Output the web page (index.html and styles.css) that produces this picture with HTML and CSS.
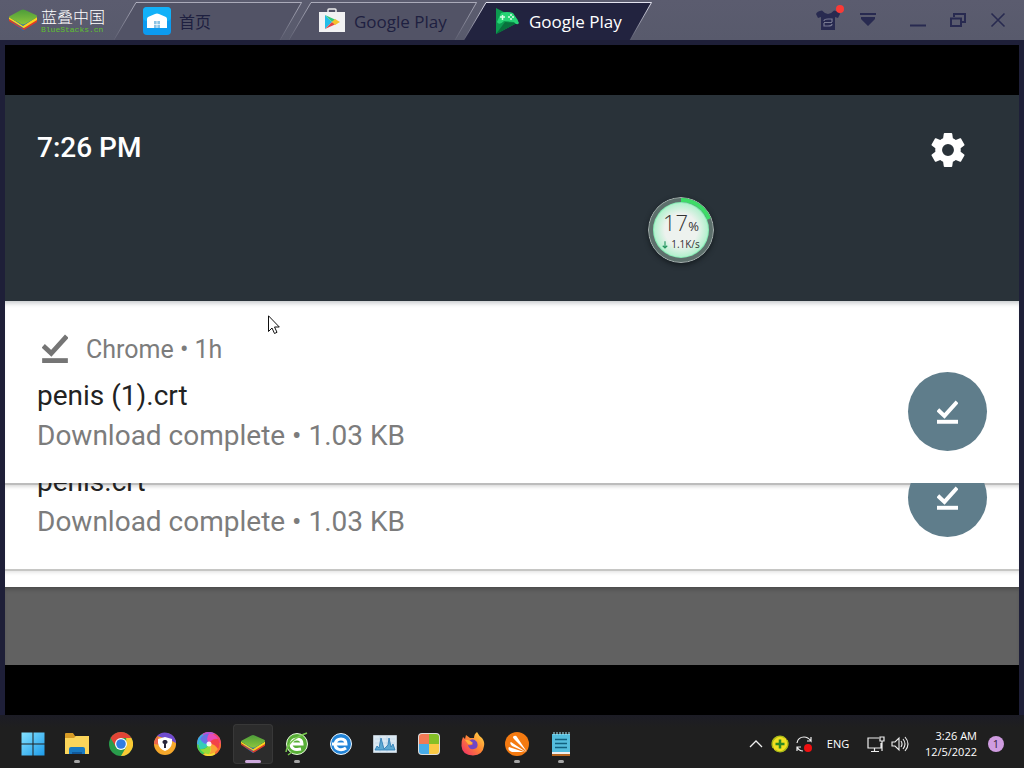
FILE: index.html
```html
<!DOCTYPE html>
<html lang="en">
<head>
<meta charset="utf-8">
<meta name="viewport" content="width=device-width, initial-scale=1">
<title>BlueStacks</title>
<link rel="stylesheet" href="styles.css">
</head>
<body>
<svg class="defs" aria-hidden="true">
  <defs>
    <linearGradient id="leaf" x2="0" y2="1"><stop stop-color="#4c9c3a"/><stop offset="1" stop-color="#8cc63c"/></linearGradient>
    <linearGradient id="edge" gradientUnits="userSpaceOnUse" x1="0" y1="0" x2="0" y2="38"><stop stop-color="#e4e4f0"/><stop offset="1" stop-color="#e4e4f0" stop-opacity=".1"/></linearGradient>
  </defs>
  <symbol id="stack" viewBox="0 0 28 22">
    <path d="M3 14 13 21Q14 22 15 21L26 14V11H3Z" fill="#2469b4"/>
    <path d="M0 10 13 19Q14 20 15 19L28 10V13L15 21Q14 21 13 20L0 12Z" fill="#e23a25"/>
    <path d="M0 8 14 17 28 8V11L15 19Q14 19 13 18L0 10Z" fill="#ffd21d"/>
    <path d="M1 7 12 1Q14 0 16 1L27 6Q29 7 27 9L16 15Q14 16 12 15L1 9Q-1 8 1 7Z" fill="url(#leaf)"/>
  </symbol>
  <symbol id="done" viewBox="0 0 24 28">
    <path d="M1 12 8.500 19 23 3" fill="none" stroke="currentColor" stroke-width="4.500"/>
    <path d="M0 23.500H24V28H0Z" fill="currentColor"/>
  </symbol>
  <symbol id="tabshape" viewBox="0 0 188 38" preserveAspectRatio="none">
    <path d="M0 38 22 .5H187.500L166 38" fill="var(--fill)" stroke="url(#edge)" stroke-opacity="var(--line)"/>
  </symbol>
</svg>

<header class="titlebar">
  <div class="brand">
    <svg class="brand-logo"><use href="#stack"/></svg>
    <div class="brand-text"><span class="brand-cn">蓝叠中国</span><span class="brand-en">BlueStacks.cn</span></div>
  </div>
  <nav class="tabs">
    <button class="tab"><svg class="tab-shape"><use href="#tabshape"/></svg>
      <svg class="tab-icon" viewBox="0 0 28 28"><rect width="28" height="28" rx="4" fill="#0c9bf0"/><rect width="28" height="14" rx="4" fill="#12b1f8"/><path d="M4 12Q4 11 5 10L12 7Q14 6 16 7L23 10Q24 11 24 12V21H4Z" fill="#fff"/><path d="M11 14H17V21H11Z" fill="#8cc3e4"/><path d="M14 14V21M11 17.500H17" stroke="#fff" stroke-width=".7"/></svg>
      <span>首页</span></button>
    <button class="tab"><svg class="tab-shape"><use href="#tabshape"/></svg>
      <svg class="tab-icon" viewBox="0 0 28 28"><path d="M10 6V3Q10 2 11 2H17Q18 2 18 3V6" fill="none" stroke="#eee" stroke-width="1.500"/><path d="M1 5H27V25H1Z" fill="#f2f2f3"/><path d="M7 8V22L14 15Z" fill="#22bde9"/><path d="M7 8 18 13 14 15Z" fill="#35c77c"/><path d="M7 22 18 17 14 15Z" fill="#e54547"/><path d="M17 12 22 15 17 18 14 15Z" fill="#f5c22d"/></svg>
      <span>Google Play</span></button>
    <button class="tab active"><svg class="tab-shape"><use href="#tabshape"/></svg>
      <svg class="tab-icon" viewBox="0 0 28 28"><path d="M3 1 24 12Q26 14 24 16L3 27Z" fill="#0c9a50"/><path d="M3 27 12 15 24 16Z" fill="#08713c"/><path d="M8 6Q14 4 20 6L24 12 26 16Q24 19 21 15L11 14Q6 19 4 15Z" fill="#27d475"/><path d="M7 10H12M9.500 8V13" stroke="#d9ffe7" stroke-width="1.500"/><g fill="#d9ffe7"><circle cx="18" cy="8" r="1"/><circle cx="18" cy="12" r="1"/><circle cx="16" cy="10" r="1"/><circle cx="20" cy="10" r="1"/></g></svg>
      <span>Google Play</span></button>
  </nav>
  <div class="window-controls">
    <button aria-label="Themes"><svg viewBox="0 0 24 24"><path d="M0 6Q1 3 6 2.500 9 6 12 6T18 2.500Q23 3 24 6L22 10 19 9V22H5V9L2 10Z" fill="#282a50"/><path d="M8 13Q8 11 12 11H16V14M16 16Q16 18 12 18H8V15M8 14.500H16" fill="none" stroke="#777991" stroke-width="1.200"/></svg><i class="alert-dot"></i></button>
    <button aria-label="Menu"><svg viewBox="0 0 24 24"><path d="M4 5H20V7H4ZM5 9H19V11L12 18 5 11Z" fill="#282a50"/></svg></button>
    <button class="minimize" aria-label="Minimize"><svg viewBox="0 0 24 24"><path d="M4 17.500H20" stroke="#282a50" stroke-width="2"/></svg></button>
    <button aria-label="Restore"><svg viewBox="0 0 24 24"><path d="M5 10.500H15V18H5ZM8 9V6H19V14H16" fill="none" stroke="#282a50" stroke-width="2"/></svg></button>
    <button aria-label="Close"><svg viewBox="0 0 24 24"><path d="M5.500 5.500 18.500 18.500M18.500 5.500 5.500 18.500" stroke="#282a50" stroke-width="1.600"/></svg></button>
  </div>
</header>

<main class="frame">
  <div class="screen">
    <section class="shade-header">
      <time class="clock">7:26 PM</time>
      <button class="settings" aria-label="Settings"><svg viewBox="2 2 20 20"><path fill="#fff" fill-rule="evenodd" d="M19.430 12.980c.04-.32.07-.64.07-.98s-.03-.66-.07-.98l2.110-1.650c.19-.15.24-.42.12-.64l-2-3.460c-.12-.22-.39-.3-.61-.22l-2.490 1c-.52-.4-1.080-.73-1.690-.98l-.38-2.650C14.460 2.180 14.250 2 14 2h-4c-.25 0-.46.180-.49.420l-.38 2.650c-.61.25-1.170.59-1.690.98l-2.490-1c-.23-.09-.49 0-.61.22l-2 3.460c-.13.22-.07.49.12.64l2.110 1.650c-.04.32-.07.65-.07.98s.03.66.07.98l-2.110 1.650c-.19.15-.24.42-.12.64l2 3.460c.12.22.39.3.61.22l2.490-1c.52.4 1.080.73 1.690.98l.38 2.650c.03.24.24.42.49.42h4c.25 0 .46-.18.49-.42l.38-2.650c.61-.25 1.170-.59 1.690-.98l2.490 1c.23.09.49 0 .61-.22l2-3.460c.12-.22.07-.49-.12-.64l-2.110-1.650zM12 15.500A3.500 3.500 0 1 1 12 8.500a3.500 3.500 0 0 1 0 7z"/></svg></button>
    </section>
    <article class="card first">
      <div class="card-source"><svg class="source-icon"><use href="#done"/></svg><span>Chrome • 1h</span></div>
      <div class="card-body">
        <div class="card-text"><h2>penis (1).crt</h2><p>Download complete • 1.03 KB</p></div>
        <div class="card-badge"><svg><use href="#done"/></svg></div>
      </div>
    </article>
    <article class="card second">
      <div class="card-body">
        <div class="card-text"><h2>penis.crt</h2><p>Download complete • 1.03 KB</p></div>
        <div class="card-badge"><svg><use href="#done"/></svg></div>
      </div>
    </article>
    <div class="card-edge"></div>
    <div class="scrim"></div>
  </div>
</main>

<footer class="taskbar">
  <nav class="apps">
    <button class="app" aria-label="Start"><svg viewBox="0 0 24 24"><defs><linearGradient id="win" x2="1" y2="1"><stop stop-color="#84e2ff"/><stop offset="1" stop-color="#1d9bea"/></linearGradient></defs><path d="M.5 .5H11.500V11.500H.5ZM12.500 .5H23.500V11.500H12.500ZM.5 12.500H11.500V23.500H.5ZM12.500 12.500H23.500V23.500H12.500Z" fill="url(#win)"/></svg></button>
    <button class="app running" aria-label="File Explorer"><svg viewBox="0 0 24 24"><path d="M0 2Q0 1 1 1H8L10 4H23Q24 4 24 5V9H0Z" fill="#d79b25"/><path d="M0 6H9L11 4H24V22H0Z" fill="#fbd55a"/><path d="M4 22V17Q4 15 6 15H18Q20 15 20 17V22Z" fill="#197ac2"/><path d="M7 22V20H17V22Z" fill="#12599b"/></svg></button>
    <button class="app" aria-label="Chrome"><svg viewBox="0 0 24 24"><circle cx="12" cy="12" r="12" fill="#299c4b"/><path d="M1.600 6A12 12 0 0 1 22.400 6H12L7 15Z" fill="#e24436"/><path d="M22.400 6A12 12 0 0 1 12 24L17.200 15V6Z" fill="#fac934"/><circle cx="12" cy="12" r="6" fill="#fff"/><circle cx="12" cy="12" r="4.800" fill="#317de3"/></svg></button>
    <button class="app" aria-label="Secure Browser"><svg viewBox="0 0 24 24"><circle cx="12" cy="12" r="11" fill="#f6a82b"/><path d="M4 4A11 11 0 0 1 23 11L17 8Z" fill="#704bd0"/><path d="M1 12A11 11 0 0 1 5 4L7 13Z" fill="#ed654d"/><path d="M5 7 12 5 19 7V11Q18 17 12 19 6 17 5 11Z" fill="#fff"/><path d="M12 8A2 2 0 0 1 13 12V16H11V12A2 2 0 0 1 12 8Z" fill="#27263c"/></svg></button>
    <button class="app" aria-label="Color Browser"><svg viewBox="-12 -12 24 24"><defs><path id="petal" d="M0 0Q-1 -8 6 -10.400A12 12 0 0 0 -6 -10.400Q-6 -3 0 0Z"/></defs><circle r="12" fill="#f58a3b"/><use href="#petal" fill="#b653d8"/><use href="#petal" fill="#f04476" transform="rotate(60)"/><use href="#petal" fill="#fa6a35" transform="rotate(120)"/><use href="#petal" fill="#f4dc30" transform="rotate(180)"/><use href="#petal" fill="#42cf57" transform="rotate(240)"/><use href="#petal" fill="#39a9ed" transform="rotate(300)"/><g transform="rotate(30) scale(.85)"><use href="#petal" fill="#e74bb9"/><use href="#petal" fill="#f34348" transform="rotate(60)"/><use href="#petal" fill="#faa535" transform="rotate(120)"/><use href="#petal" fill="#97dc3a" transform="rotate(180)"/><use href="#petal" fill="#35cdb5" transform="rotate(240)"/><use href="#petal" fill="#6873e4" transform="rotate(300)"/></g><circle r="2.500" fill="#fff" opacity=".9"/></svg></button>
    <button class="app current" aria-label="BlueStacks"><svg viewBox="0 0 28 24"><use href="#stack" width="28" height="22" y="1"/></svg></button>
    <button class="app running" aria-label="360 Browser"><svg viewBox="0 0 24 24"><circle cx="12" cy="12" r="10.500" fill="#58ae37" stroke="#e8f9df"/><path d="M16 17Q6 19 6 12 7 7 12 7 17 7 17 12H7" fill="none" stroke="#fff" stroke-width="3"/><path d="M1 20Q3 8 22 1M3 23 7 20" fill="none" stroke="#79c950" stroke-width="1.500"/></svg></button>
    <button class="app" aria-label="Web Browser"><svg viewBox="0 0 24 24"><circle cx="12" cy="12" r="10.500" fill="#2284d8" stroke="#eef8ff"/><path d="M17 16Q13 19 9 17 6 16 6 12 7 7 12 7 17 7 17 12H3" fill="none" stroke="#fff" stroke-width="3"/></svg></button>
    <button class="app" aria-label="Resource Monitor"><svg viewBox="0 0 24 24"><path d="M.5 3.500H23.500V20.500H.5Z" fill="#dbe9f3" stroke="#b8c3cc"/><path d="M2 7H22M2 11H22M7 4V20M14 4V20" stroke="#b3cee2" stroke-width=".5"/><path d="M2 18 4 14 6 16 8 6 11 17 15 13 16 6 18 15 20 12 22 18Z" fill="#5ca8d1" stroke="#2978b3" stroke-width=".8"/></svg></button>
    <button class="app" aria-label="Color Tiles"><svg viewBox="0 0 24 24"><rect x="1" y="1" width="22" height="22" rx="4" fill="#ddd"/><path d="M12 2V12H2V5Q2 2 5 2Z" fill="#f17a55"/><path d="M12 2H19Q22 2 22 5V12H12Z" fill="#85bf27"/><path d="M2 12H12V22H5Q2 22 2 19Z" fill="#48ace9"/><path d="M12 12H22V19Q22 22 19 22H12Z" fill="#fac945"/></svg></button>
    <button class="app" aria-label="Firefox"><svg viewBox="0 0 24 24"><defs><linearGradient id="fox" x1="1" x2="0" y2="1"><stop stop-color="#ffe14a"/><stop offset=".45" stop-color="#ff8a32"/><stop offset="1" stop-color="#ee246c"/></linearGradient></defs><path d="M2 5 4 7 5 3 9 6 13 6Q13 2 16 0 18 4 21 6 24 10 23 14 22 23 12 23.500 1 23 .5 14 0 9 2 5Z" fill="url(#fox)"/><path d="M8 9Q12 5 16 10 18 16 13 17 8 18 7 13Q10 14 12 12Z" fill="#7045c6"/><path d="M4 8Q8 7 12 11 9 13 7 12Z" fill="#ffb03b"/></svg></button>
    <button class="app running" aria-label="Avast"><svg viewBox="0 0 24 24"><circle cx="12" cy="12" r="12" fill="#f47a11"/><path d="M9 4Q11 3 12 5L22 20 9 7Q7 5 9 4ZM6 10 21 20 7 14Q4 11 6 10ZM4 15 19 20H7Q2 18 4 15Z" fill="#fff"/></svg></button>
    <button class="app running" aria-label="Notepad"><svg viewBox="0 0 24 24"><path d="M3 2H21V21H3Z" fill="#54bddd"/><path d="M3 20H21V22H3Z" fill="#eee"/><path d="M3 22H21V24H3Z" fill="#b76620"/><path d="M5 0V3M8 0V3M11 0V3M14 0V3M17 0V3M20 0V3" stroke="#abe8f6"/><path d="M6 7.500H18M6 11.500H18M6 15.500H18" stroke="#11617f" stroke-width="1.700"/></svg></button>
  </nav>
  <div class="tray">
    <button aria-label="Show hidden icons"><svg viewBox="0 0 20 20"><path d="M4 13 10 7 16 13" fill="none" stroke="#eee" stroke-width="1.300"/></svg></button>
    <button aria-label="Security"><svg viewBox="0 0 20 20"><circle cx="10" cy="10" r="8" fill="#f1df20"/><path d="M3 14A8 8 0 0 1 15 4M17 6A8 8 0 0 1 5 16" fill="none" stroke="#a9ba18" stroke-width="1.500"/><path d="M10 5.500V14.500M5.500 10H14.500" stroke="#2c8825" stroke-width="2.500"/></svg></button>
    <button aria-label="Updates"><svg viewBox="0 0 20 20"><path d="M3 9Q4 3 10 3 14 3 17 7V3M17 7H13M3 17V13H7M3 13Q5 17 9 17" fill="none" stroke="#eee" stroke-width="1.200"/><circle cx="14" cy="14" r="4" fill="#f01010"/></svg></button>
    <button class="language">ENG</button>
    <button aria-label="Network"><svg viewBox="0 0 20 20"><path d="M13 4H2V14H15V9M8.500 14V17M5 17.500H13M14 3H18V7H14ZM16 7V17" fill="none" stroke="#eee" stroke-width="1.200"/></svg></button>
    <button aria-label="Volume"><svg viewBox="0 0 20 20"><path d="M2 8H5L9 4V16L5 12H2ZM11 7Q13 10 11 13M13 5Q17 10 13 15M15 3Q21 10 15 17" fill="none" stroke="#eee" stroke-width="1.100"/></svg></button>
    <button class="datetime"><span>3:26 AM</span><span>12/5/2022</span></button>
    <button class="count">1</button>
  </div>
</footer>

<aside class="speed">
  <svg class="speed-ring" viewBox="0 0 66 66"><circle cx="33" cy="33" r="32.500" fill="#5d706c" stroke="#a9b3b1"/><path d="M33 3A30 30 0 0 1 61 22" fill="none" stroke="#3ddc68" stroke-width="4"/><circle cx="33" cy="33" r="28" fill="#86edb5"/><circle cx="33" cy="33" r="27" fill="url(#disc)"/><defs><radialGradient id="disc"><stop offset=".6" stop-color="#edf2ee"/><stop offset="1" stop-color="#b2f0cd"/></radialGradient></defs></svg>
  <div class="speed-text">
    <div class="speed-value">17<small>%</small></div>
    <div class="speed-rate"><svg viewBox="0 0 8 10"><path d="M4 0V9M1 6 4 9 7 6" fill="none" stroke="#23945e" stroke-width="1.500"/></svg>1.1K/s</div>
  </div>
</aside>
<svg class="pointer" viewBox="0 0 12 20" aria-hidden="true"><path d="M.5 .8V16.500L4 13 6.500 18.500 9 17.300 6.500 12H11.300Z" fill="#fff" stroke="#111"/></svg>
</body>
</html>
```
FILE: styles.css
```css
* { box-sizing: border-box; }
body {
  margin: 0;
  min-height: 100vh;
  display: flex;
  flex-direction: column;
  position: relative;
  background: #1e1f38;
  font-family: "Open Sans", "Noto Sans CJK SC", sans-serif;
}
button { margin: 0; padding: 0; border: 0; background: none; color: inherit; font: inherit; }
h2, p { margin: 0; font-weight: 400; }
.defs { position: absolute; width: 0; height: 0; }

.titlebar { display: flex; height: 40px; background: linear-gradient(#5b5c6f, #585a6c); }
.brand { display: flex; align-items: center; gap: 4px; width: 114px; padding-left: 9px; flex: none; }
.brand-logo { width: 28px; height: 22px; }
.brand-text { display: flex; flex-direction: column; }
.brand-cn { font-size: 16px; line-height: 20px; color: #fff; font-family: "Noto Sans CJK SC", sans-serif; font-weight: 300; }
.brand-en { font: 8px/8px "Liberation Mono", monospace; color: #5fc12f; }
.tabs { display: flex; padding-top: 2px; }
.tab {
  --fill: #525366;
  --line: .6;
  position: relative;
  display: flex;
  align-items: center;
  gap: 8px;
  width: 188px;
  height: 38px;
  margin-right: -13px;
  padding-left: 29px;
  font-size: 16px;
  color: #1e2040;
}
.tab span { font-size: 17px; }
.tab:first-child span { font-size: 16px; }
.tab.active { --fill: #22233f; --line: 1; color: #fff; }
.tab-shape { position: absolute; inset: 0; width: 100%; height: 100%; }
.tab-icon { position: relative; width: 28px; height: 28px; flex: none; }
.tab span { position: relative; white-space: nowrap; }
.window-controls { display: flex; margin-left: auto; padding-right: 6px; }
.window-controls button { position: relative; width: 40px; display: grid; place-items: center; }
.window-controls svg { width: 24px; height: 24px; }
.window-controls .minimize { margin-left: 10px; }
.alert-dot { position: absolute; top: 5px; right: 4px; width: 8px; height: 8px; border-radius: 50%; background: #fb3a36; }

.frame { flex: 1; display: flex; padding: 5px 5px 0; }
.screen { flex: 1; display: flex; flex-direction: column; padding: 50px 0; background: #000; font-family: Roboto, sans-serif; }
.shade-header {
  display: flex;
  align-items: flex-start;
  justify-content: space-between;
  height: 206px;
  padding: 36px 54px 0 32px;
  background: #293239;
}
.clock { font-size: 28px; line-height: 34px; font-weight: 500; color: #fff; }
.settings { height: 34px; margin-top: 2px; }
.settings svg { display: block; width: 34px; height: 34px; }
.card { padding: 0 32px 27px; background: #fff; overflow: hidden; }
.first { padding-top: 30px; box-shadow: inset 0 5px 5px -3px #c3c6ca; }
.second { display: flex; flex-direction: column; justify-content: flex-end; height: 86px; box-shadow: inset 0 2px 0 #bcbcbc, inset 0 5px 4px -2px #ccc; }
.card-source { display: flex; align-items: center; gap: 18px; height: 36px; margin-bottom: 9px; padding-left: 5px; font-size: 25px; color: #7c7c7c; }
.source-icon { width: 26px; height: 30px; margin-bottom: 3px; color: #757575; }
.card-body { display: flex; justify-content: space-between; }
.card-text h2, .card-text p { font-size: 28px; line-height: 40px; }
.card-text h2 { color: #222; }
.card-text p { color: #7c7c7c; }
.card-badge { display: grid; place-items: center; width: 79px; height: 79px; margin: -4px 0 5px; border-radius: 50%; background: #5f7d8b; color: #fff; }
.card-badge svg { width: 21px; height: 25px; }
.card-edge { height: 18px; background: #fff; box-shadow: inset 0 2px 0 #c6c6c4, inset 0 5px 4px -2px #ddd; }
.scrim { flex: 1; background: #616161; box-shadow: inset 0 4px 4px -2px #484848; }

.taskbar { display: flex; align-items: center; height: 53px; padding: 4px 20px 0 13px; background: linear-gradient(#1c1c25, #1f1f1f 12px); color: #fff; }
.apps { display: flex; gap: 4px; }
.app { position: relative; display: grid; place-items: center; width: 40px; height: 40px; border-radius: 4px; }
.app svg { width: 24px; height: 24px; }
.current { background: #2c2c2c; box-shadow: inset 0 0 0 1px #383838; }
.running::after, .current::after { content: ""; position: absolute; bottom: 1px; left: 50%; width: 6px; height: 3px; border-radius: 2px; background: #a5a5a5; transform: translateX(-50%); }
.current::after { width: 16px; background: #cda9dc; }
.tray { display: flex; align-items: center; gap: 4px; margin-left: auto; font-size: 12px; }
.tray svg { display: block; width: 20px; height: 20px; }
.language { width: 40px; font-size: 11px; }
.language + button { margin-left: 4px; }
.datetime { display: flex; flex-direction: column; align-items: flex-end; width: 63px; line-height: 16px; font-size: 11px; }
.count { width: 16px; height: 16px; margin-left: 7px; border-radius: 50%; background: #cf9ce0; color: #33213b; font-size: 11px; line-height: 16px; }

.speed { position: absolute; left: 648px; top: 197px; width: 66px; height: 66px; }
.speed-ring { display: block; width: 66px; height: 66px; border-radius: 50%; box-shadow: 0 2px 5px #151c20; }
.speed-text { position: absolute; inset: 13px 0 0; display: flex; flex-direction: column; align-items: center; color: #333; }
.speed-value { font-size: 22px; line-height: 24px; font-weight: 300; }
.speed-value small { font-size: 13px; font-weight: 400; }
.speed-rate { display: flex; align-items: center; gap: 3px; font-size: 10px; line-height: 13px; }
.speed-rate svg { width: 6px; height: 8px; }
.pointer { position: absolute; left: 268px; top: 315px; width: 12px; height: 20px; }
```
